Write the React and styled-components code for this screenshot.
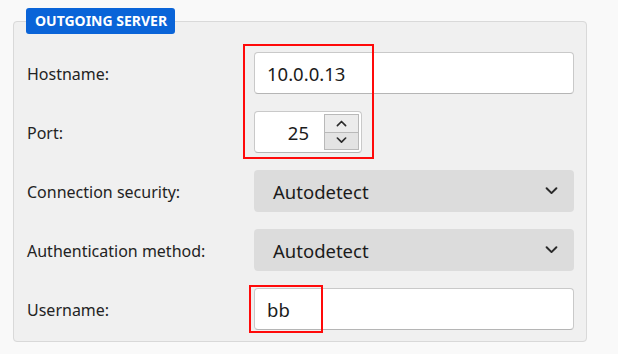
import React from 'react';
import styled, { createGlobalStyle } from 'styled-components';

const GlobalStyle = createGlobalStyle`
  html, body {
    margin: 0;
    padding: 0;
    background: #f9f9f9;
  }
  body {
    font-family: 'Noto Sans', 'Liberation Sans', sans-serif;
    color: #1f1f1f;
  }
`;

const Page = styled.div`
  width: 618px;
  height: 354px;
  padding: 8px 0 0 13px;
  box-sizing: border-box;
  overflow: hidden;
`;

const Panel = styled.fieldset`
  width: 574px;
  box-sizing: border-box;
  margin: 0;
  padding: 18px 12px 11px 13px;
  background: #f0f0f0;
  border: 1px solid #d9d9d9;
  border-radius: 4px;
  min-width: 0;
`;

const Badge = styled.legend`
  margin-left: -1px;
  padding: 0 8px 0 9px;
  height: 26px;
  line-height: 26px;
  background: #0a64d8;
  color: #fff;
  font-size: 14px;
  font-weight: 700;
  border-radius: 3px;
`;

const Form = styled.div`
  display: grid;
  grid-template-columns: 227px 320px;
  grid-auto-rows: 42px;
  row-gap: 17px;
  align-items: center;
`;

const Label = styled.label`
  font-size: 16px;
  color: #232323;
  padding-top: 2px;
`;

const Cell = styled.div`
  position: relative;
  height: 42px;
  display: flex;
`;

const TextBox = styled.div`
  flex: ${(p) => (p.$narrow ? '0 0 108px' : '1')};
  box-sizing: border-box;
  height: 42px;
  background: #fff;
  border: 1px solid #c9c9c9;
  border-bottom-color: #b5b5b5;
  border-radius: 4px;
  display: flex;
  align-items: center;
  padding: 0 0 0 12px;
  font-size: 18.5px;
  color: #1b1b1b;
`;

const NumberValue = styled.span`
  flex: 1;
  text-align: right;
  padding-right: 15px;
`;

const Spinner = styled.div`
  width: 35px;
  height: 36px;
  margin-right: 2px;
  display: flex;
  flex-direction: column;
  border: 1px solid #b9b9b9;
  box-sizing: border-box;
`;

const SpinButton = styled.div`
  flex: 1;
  display: flex;
  align-items: center;
  justify-content: center;
  background: ${(p) => (p.$down ? '#e3e3e3' : '#ececec')};
  border-top: ${(p) => (p.$down ? '1px solid #b9b9b9' : 'none')};
`;

const Select = styled.div`
  flex: 1;
  height: 42px;
  border-radius: 4px;
  background: #dcdcdc;
  display: flex;
  align-items: center;
  justify-content: space-between;
  padding: 0 16px 0 19px;
  font-size: 18.5px;
  color: #1b1b1b;
`;

const Highlight = styled.div`
  position: absolute;
  left: ${(p) => p.$left}px;
  top: ${(p) => p.$top}px;
  width: ${(p) => p.$w}px;
  height: ${(p) => p.$h}px;
  border: 2px solid #ff0a0a;
  box-sizing: border-box;
  pointer-events: none;
`;

const Chevron = ({ up, size = 12 }) => (
  <svg width={size} height={size * 0.6} viewBox="0 0 12 7" fill="none">
    <path
      d={up ? 'M1.5 6 L6 1.5 L10.5 6' : 'M1.5 1 L6 5.5 L10.5 1'}
      stroke="#2a2a2a"
      strokeWidth="1.8"
      strokeLinecap="round"
      strokeLinejoin="round"
    />
  </svg>
);

const App = () => (
  <>
    <GlobalStyle />
    <Page>
      <Panel>
        <Badge>OUTGOING SERVER</Badge>
        <Form>
          <Label>Hostname:</Label>
          <Cell>
            <TextBox>10.0.0.13</TextBox>
            <Highlight $left={-11} $top={-8} $w={131} $h={115} />
          </Cell>

          <Label>Port:</Label>
          <Cell>
            <TextBox $narrow>
              <NumberValue>25</NumberValue>
              <Spinner>
                <SpinButton>
                  <Chevron up size={11} />
                </SpinButton>
                <SpinButton $down>
                  <Chevron size={11} />
                </SpinButton>
              </Spinner>
            </TextBox>
          </Cell>

          <Label>Connection security:</Label>
          <Cell>
            <Select>
              Autodetect
              <Chevron size={13} />
            </Select>
          </Cell>

          <Label>Authentication method:</Label>
          <Cell>
            <Select>
              Autodetect
              <Chevron size={13} />
            </Select>
          </Cell>

          <Label>Username:</Label>
          <Cell>
            <TextBox>bb</TextBox>
            <Highlight $left={-5} $top={-3} $w={74} $h={48} />
          </Cell>
        </Form>
      </Panel>
    </Page>
  </>
);

export default App;
